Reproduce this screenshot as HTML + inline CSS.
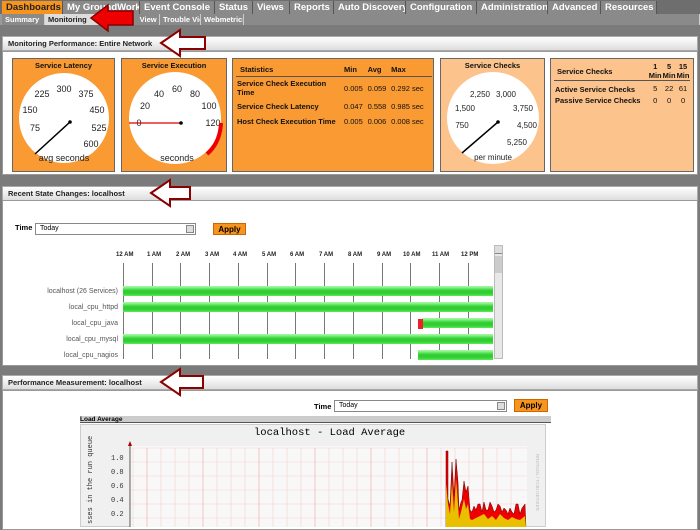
<!DOCTYPE html>
<html><head><style>
*{margin:0;padding:0;box-sizing:border-box}
body{width:700px;height:527px;overflow:hidden;background:#7b7b7b;font-family:"Liberation Sans",sans-serif;position:relative}
.abs{position:absolute}
.nav{left:0;top:0;width:700px;height:15px;background:#6e6e6e;}
.nav span{position:absolute;top:1px;height:13px;background:#8a8a8a;color:#fff;font-size:9.5px;font-weight:bold;line-height:13px;padding-left:4px;border-right:1px solid #555;white-space:nowrap;overflow:hidden}
.sub{left:0;top:14px;width:700px;height:11px;background:#9a9a9a}
.sub span{position:absolute;top:0;height:11px;background:#8a8a8a;color:#fff;font-size:7.5px;font-weight:bold;line-height:11px;padding-left:3px;border-right:1px solid #ccc;white-space:nowrap;overflow:hidden}
.hdr{left:2px;width:696px;height:15px;background:linear-gradient(#fff,#ddd);border:1px solid #aaa;font-size:7.5px;font-weight:bold;color:#222;line-height:14px;padding-left:5px}
.pan{left:2px;width:696px;background:#fff;border:1px solid #999}
.box{position:absolute;border:1px solid #666;background:#f99a33;font-size:7.5px;font-weight:bold;color:#111}
.box.l{background:#fcc38c}
table{border-collapse:collapse;font-size:7.5px}
.tl{font-size:6px;font-weight:bold;color:#222}
.tl span{white-space:nowrap}
.row{position:absolute;height:10px;background:linear-gradient(#8f8,#3c3 40%,#3c3 70%,#5e5);border-top:1px solid #aea}
.lab{position:absolute;right:582px;font-size:7px;color:#555;text-align:right;white-space:nowrap}
.vl{position:absolute;top:263px;width:1px;height:96px;background:#777}
</style></head><body>
<div class="abs nav">
<span style="left:2px;width:61px;background:#f7941d;color:#222">Dashboards</span>
<span style="left:63px;width:77px">My GroundWork</span>
<span style="left:140px;width:75px">Event Console</span>
<span style="left:215px;width:38px">Status</span>
<span style="left:253px;width:37px">Views</span>
<span style="left:290px;width:44px">Reports</span>
<span style="left:334px;width:72px">Auto Discovery</span>
<span style="left:406px;width:71px">Configuration</span>
<span style="left:477px;width:71px">Administration</span>
<span style="left:548px;width:53px">Advanced</span>
<span style="left:601px;width:56px">Resources</span>
</div>
<div class="abs sub">
<span style="left:2px;width:43px">Summary</span>
<span style="left:45px;width:75px;background:#ddd;color:#222">Monitoring</span>
<span style="left:120px;width:40px">&nbsp;&nbsp;&nbsp;&nbsp;&nbsp;&nbsp;&nbsp;&nbsp;View</span>
<span style="left:160px;width:41px">Trouble View</span>
<span style="left:201px;width:43px">Webmetrics</span>
<span style="left:244px;width:456px;background:#8a8a8a"></span>
</div>

<div class="abs hdr" style="top:36px">Monitoring Performance: Entire Network</div>
<div class="abs pan" style="top:51px;height:124px">
<div class="box" style="left:9px;top:6px;width:103px;height:114px">
<div style="text-align:center;margin-top:2px">Service Latency</div>
<svg class="abs" style="left:4px;top:12px" width="94" height="94" viewBox="0 0 94 94"><circle cx="47" cy="47" r="45" fill="#fff"/>
<g font-size="9" fill="#222" font-weight="normal" text-anchor="middle"><text x="18" y="60">75</text><text x="13" y="42">150</text><text x="25" y="26">225</text><text x="47" y="21">300</text><text x="69" y="26">375</text><text x="80" y="42">450</text><text x="82" y="60">525</text><text x="74" y="76">600</text><text x="47" y="90">avg seconds</text></g>
<line x1="53" y1="51" x2="18" y2="83" stroke="#000" stroke-width="1.5"/><circle cx="53" cy="51" r="1.8"/></svg>
</div>
<div class="box" style="left:118px;top:6px;width:106px;height:114px">
<div style="text-align:center;margin-top:2px">Service Execution</div>
<svg class="abs" style="left:5px;top:12px" width="96" height="96" viewBox="0 0 96 96"><circle cx="48" cy="47" r="46" fill="#fff"/>
<g font-size="9" fill="#222" font-weight="normal" text-anchor="middle"><text x="12" y="55">0</text><text x="18" y="38">20</text><text x="32" y="26">40</text><text x="50" y="21">60</text><text x="68" y="26">80</text><text x="82" y="38">100</text><text x="86" y="55">120</text><text x="50" y="90">seconds</text></g>
<line x1="2" y1="52" x2="54" y2="52" stroke="#d00" stroke-width="1.3"/><circle cx="54" cy="52" r="1.8"/>
<path d="M94 52 Q93 72 80 83" stroke="#e00" stroke-width="4" fill="none"/></svg>
</div>
<div class="box" style="left:229px;top:6px;width:202px;height:114px">
<table style="margin:4px 3px;width:196px"><tr style="border-bottom:1px solid #555"><td style="padding:2px 4px">Statistics</td><td>Min</td><td>Avg</td><td>Max</td></tr>
<tr><td style="padding:2px 1px;width:108px">Service Check Execution Time</td><td style="font-weight:normal">0.005</td><td style="font-weight:normal">0.059</td><td style="font-weight:normal">0.292 sec</td></tr>
<tr><td style="padding:3px 1px">Service Check Latency</td><td style="font-weight:normal">0.047</td><td style="font-weight:normal">0.558</td><td style="font-weight:normal">0.985 sec</td></tr>
<tr><td style="padding:3px 1px">Host Check Execution Time</td><td style="font-weight:normal">0.005</td><td style="font-weight:normal">0.006</td><td style="font-weight:normal">0.008 sec</td></tr></table>
</div>
<div class="box l" style="left:437px;top:6px;width:105px;height:114px">
<div style="text-align:center;margin-top:2px">Service Checks</div>
<svg class="abs" style="left:4px;top:12px" width="96" height="96" viewBox="0 0 96 96"><circle cx="48" cy="47" r="46" fill="#fff"/>
<g font-size="8" fill="#222" font-weight="normal" text-anchor="middle"><text x="17" y="57">750</text><text x="20" y="40">1,500</text><text x="35" y="26">2,250</text><text x="61" y="26">3,000</text><text x="78" y="40">3,750</text><text x="82" y="57">4,500</text><text x="72" y="74">5,250</text><text x="48" y="89">per minute</text></g>
<line x1="53" y1="51" x2="17" y2="82" stroke="#000" stroke-width="1.5"/><circle cx="53" cy="51" r="1.8"/></svg>
</div>
<div class="box l" style="left:547px;top:6px;width:144px;height:114px">
<table style="margin:3px 3px;width:136px"><tr style="border-bottom:1px solid #555"><td style="padding:2px 3px">Service Checks</td><td style="text-align:center">1<br>Min</td><td style="text-align:center">5<br>Min</td><td style="text-align:center">15<br>Min</td></tr>
<tr><td style="padding:4px 1px 1px">Active Service Checks</td><td style="text-align:center;font-weight:normal">5</td><td style="text-align:center;font-weight:normal">22</td><td style="text-align:center;font-weight:normal">61</td></tr>
<tr><td style="padding:1px">Passive Service Checks</td><td style="text-align:center;font-weight:normal">0</td><td style="text-align:center;font-weight:normal">0</td><td style="text-align:center;font-weight:normal">0</td></tr></table>
</div>
</div>

<div class="abs hdr" style="top:186px">Recent State Changes: localhost</div>
<div class="abs pan" style="top:200px;height:166px"></div>
<div class="abs" style="left:15px;top:223px;font-size:7.5px;font-weight:bold">Time</div>
<div class="abs" style="left:35px;top:223px;width:161px;height:12px;border:1px solid #888;font-size:7px;line-height:10px;padding-left:4px;background:#fff">Today<span class="abs" style="right:1px;top:1px;width:8px;height:8px;background:#ddd;border:1px solid #888"></span></div>
<div class="abs" style="left:213px;top:223px;width:33px;height:12px;background:#f7941d;border:1px solid #c60;font-size:8px;font-weight:bold;line-height:11px;text-align:center">Apply</div>
<div class="abs tl" style="left:0;top:252px;width:700px;height:8px">
<span class="abs" style="left:116px">12 AM</span><span class="abs" style="left:147px">1 AM</span><span class="abs" style="left:176px">2 AM</span><span class="abs" style="left:205px">3 AM</span><span class="abs" style="left:233px">4 AM</span><span class="abs" style="left:262px">5 AM</span><span class="abs" style="left:290px">6 AM</span><span class="abs" style="left:319px">7 AM</span><span class="abs" style="left:348px">8 AM</span><span class="abs" style="left:377px">9 AM</span><span class="abs" style="left:403px">10 AM</span><span class="abs" style="left:432px">11 AM</span><span class="abs" style="left:461px">12 PM</span></div>
<div class="vl" style="left:123px"></div><div class="vl" style="left:152px"></div><div class="vl" style="left:180px"></div><div class="vl" style="left:209px"></div><div class="vl" style="left:238px"></div><div class="vl" style="left:267px"></div><div class="vl" style="left:295px"></div><div class="vl" style="left:324px"></div><div class="vl" style="left:353px"></div><div class="vl" style="left:382px"></div><div class="vl" style="left:410px"></div><div class="vl" style="left:439px"></div><div class="vl" style="left:468px"></div>
<div class="row" style="top:286px;left:123px;width:370px"></div>
<div class="row" style="top:302px;left:123px;width:370px"></div>
<div class="row" style="top:318px;left:422px;width:71px"></div>
<div class="abs" style="left:418px;top:319px;width:5px;height:10px;background:#e22"></div>
<div class="row" style="top:334px;left:123px;width:370px"></div>
<div class="row" style="top:350px;left:418px;width:75px"></div>
<div class="lab" style="top:288px">localhost (26 Services)</div>
<div class="lab" style="top:304px">local_cpu_httpd</div>
<div class="lab" style="top:320px">local_cpu_java</div>
<div class="lab" style="top:336px">local_cpu_mysql</div>
<div class="lab" style="top:352px">local_cpu_nagios</div>
<div class="abs" style="left:494px;top:245px;width:9px;height:114px;background:#e8e8e8;border:1px solid #bbb"><div style="height:8px;background:#ddd;border-bottom:1px solid #888"></div><div style="margin-top:2px;height:17px;background:#ccc"></div></div>

<div class="abs hdr" style="top:375px">Performance Measurement: localhost</div>
<div class="abs pan" style="top:390px;height:140px"></div>
<div class="abs" style="left:314px;top:402px;font-size:7.5px;font-weight:bold">Time</div>
<div class="abs" style="left:334px;top:400px;width:173px;height:12px;border:1px solid #888;font-size:7px;line-height:10px;padding-left:4px;background:#fff">Today<span class="abs" style="right:1px;top:1px;width:8px;height:8px;background:#ddd;border:1px solid #888"></span></div>
<div class="abs" style="left:514px;top:399px;width:34px;height:13px;background:#f7941d;border:1px solid #c60;font-size:8px;font-weight:bold;line-height:12px;text-align:center">Apply</div>
<div class="abs" style="left:80px;top:416px;width:471px;height:7px;background:#ccc;border-bottom:1px solid #555;font-size:6.5px;font-weight:bold;line-height:7px">Load Average</div>
<div class="abs" style="left:80px;top:424px;width:466px;height:103px;background:#f0f0f0;border:1px solid #ccc"></div>
<div class="abs" style="left:254px;top:427px;font-family:'Liberation Mono',monospace;font-size:10.5px">localhost - Load Average</div>
<svg class="abs" style="left:80px;top:424px" width="466" height="103">
<rect x="50" y="22" width="397" height="81" fill="#f8f8f8"/>
<g stroke="#f5d0d0" stroke-width="0.6">
<line x1="50" y1="24" x2="447" y2="24"/>
<line x1="50" y1="38" x2="447" y2="38"/><line x1="50" y1="52" x2="447" y2="52"/><line x1="50" y1="66" x2="447" y2="66"/><line x1="50" y1="80" x2="447" y2="80"/><line x1="50" y1="94" x2="447" y2="94"/>
<line x1="53" y1="24" x2="53" y2="103"/><line x1="81" y1="24" x2="81" y2="103"/><line x1="95" y1="24" x2="95" y2="103"/><line x1="109" y1="24" x2="109" y2="103"/><line x1="137" y1="24" x2="137" y2="103"/><line x1="151" y1="24" x2="151" y2="103"/><line x1="165" y1="24" x2="165" y2="103"/><line x1="193" y1="24" x2="193" y2="103"/><line x1="207" y1="24" x2="207" y2="103"/><line x1="221" y1="24" x2="221" y2="103"/><line x1="249" y1="24" x2="249" y2="103"/><line x1="263" y1="24" x2="263" y2="103"/><line x1="277" y1="24" x2="277" y2="103"/><line x1="305" y1="24" x2="305" y2="103"/><line x1="319" y1="24" x2="319" y2="103"/><line x1="333" y1="24" x2="333" y2="103"/><line x1="361" y1="24" x2="361" y2="103"/><line x1="375" y1="24" x2="375" y2="103"/><line x1="389" y1="24" x2="389" y2="103"/><line x1="417" y1="24" x2="417" y2="103"/><line x1="431" y1="24" x2="431" y2="103"/></g>
<g stroke="#efb0b0" stroke-width="0.7"><line x1="67" y1="24" x2="67" y2="103"/><line x1="123" y1="24" x2="123" y2="103"/><line x1="179" y1="24" x2="179" y2="103"/><line x1="235" y1="24" x2="235" y2="103"/><line x1="291" y1="24" x2="291" y2="103"/><line x1="347" y1="24" x2="347" y2="103"/><line x1="403" y1="24" x2="403" y2="103"/></g>
<line x1="50" y1="20" x2="50" y2="103" stroke="#333" stroke-width="0.8"/>
<path d="M48 22 L50 17 L52 22Z" fill="#a00"/>
<g font-family="Liberation Mono,monospace" font-size="7" fill="#333"><text x="31" y="36">1.0</text><text x="31" y="50">0.8</text><text x="31" y="64">0.6</text><text x="31" y="78">0.4</text><text x="31" y="92">0.2</text></g>
<text transform="translate(12,100) rotate(-90)" font-family="Liberation Mono,monospace" font-size="7" fill="#333">sses in the run queue</text>
<g transform="translate(1,0)">
<path d="M365 103 L365 27 L367 27 L367 75 L369 82 L371 38 L373 72 L375 35 L377 58 L378 86 L380 78 L381 76 L383 57 L385 68 L387 62 L389 86 L391 88 L393 82 L395 86 L397 80 L399 80 L401 88 L403 78 L405 86 L407 86 L409 78 L411 82 L413 88 L415 86 L417 80 L419 82 L421 88 L423 84 L425 86 L427 90 L429 84 L431 88 L433 90 L435 80 L437 80 L439 90 L441 84 L444 80 L445 103Z" fill="#e00" stroke="#600" stroke-width="0.5"/>
<path d="M365 103 L365 60 L367 80 L369 90 L371 58 L373 88 L375 55 L377 80 L378 95 L380 88 L383 75 L385 85 L387 80 L389 95 L391 96 L395 94 L399 92 L403 90 L407 95 L411 92 L415 96 L419 90 L423 94 L427 96 L431 93 L435 95 L439 96 L444 92 L445 103Z" fill="#e8c000"/>
</g>
<text transform="translate(456,30) rotate(90)" font-size="4.5" fill="#bbb">RRDTOOL / TOBI OETIKER</text>
</svg>

<svg class="abs" style="left:0;top:0" width="700" height="400">
<path d="M91 18 L108 5 L108 11 L133 11 L133 25 L108 25 L108 31 Z" fill="#e00" stroke="#800" stroke-width="1.5"/>
<path d="M161 43 L180 30 L180 37 L205 37 L205 49 L180 49 L180 56 Z" fill="#fff" stroke="#8b0000" stroke-width="2"/>
<path d="M151 193 L170 180 L170 187 L190 187 L190 199 L170 199 L170 206 Z" fill="#fff" stroke="#8b0000" stroke-width="2"/>
<path d="M161 382 L180 369 L180 376 L203 376 L203 388 L180 388 L180 395 Z" fill="#fff" stroke="#8b0000" stroke-width="2"/>
</svg>
</body></html>
